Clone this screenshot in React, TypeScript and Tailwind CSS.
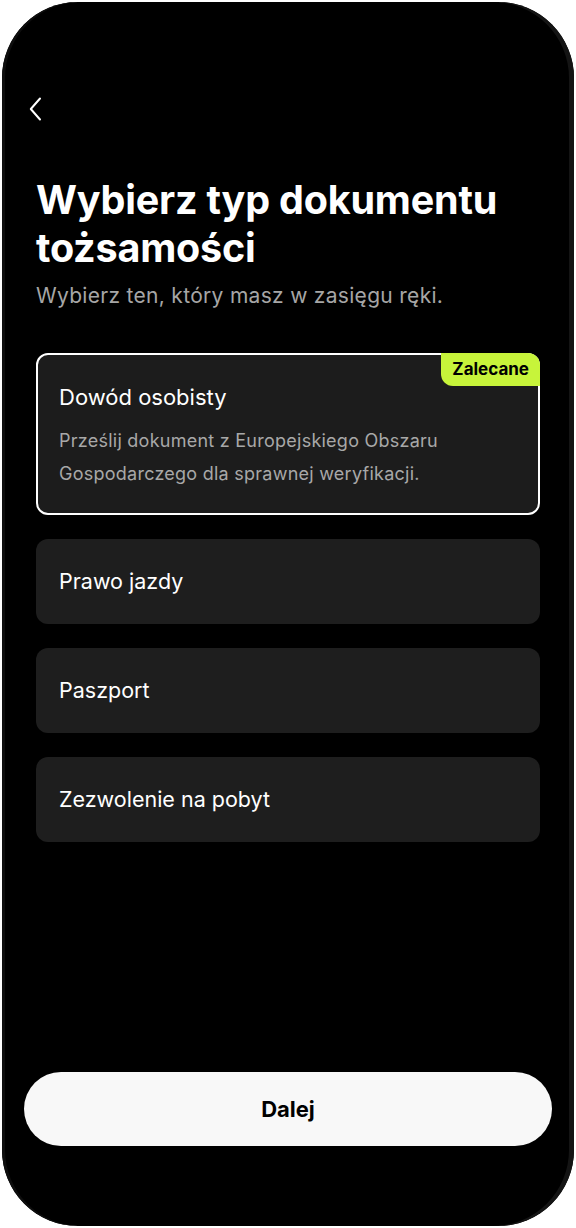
import React from 'react';

const font = { fontFamily: 'Inter, "Liberation Sans", sans-serif' };

const options = ['Prawo jazdy', 'Paszport', 'Zezwolenie na pobyt'];

export default function App() {
  return (
    <div className="min-h-screen bg-white p-[2px]" style={font}>
      <div className="h-[1224px] rounded-[76px] bg-black flex flex-col shadow-[inset_-5px_0_0_#141414,inset_3px_0_0_#0e0e0e]">
        {/* Back */}
        <div className="pt-[95px] pl-[27px]">
          <svg width="14" height="24" viewBox="0 0 14 24" fill="none">
            <path d="M11 1.5 1.8 12 11 22.5" stroke="#fff" strokeWidth="2" strokeLinecap="round" strokeLinejoin="round" />
          </svg>
        </div>

        {/* Heading */}
        <div className="px-[34px] mt-[55px]">
          <h1 className="text-[39.5px] leading-[48px] font-bold text-white tracking-[-0.2px]">
            Wybierz typ dokumentu tożsamości
          </h1>
          <p className="mt-[10px] text-[21px] leading-[28px] tracking-[0.3px] text-[#a6a6a6]">
            Wybierz ten, który masz w zasięgu ręki.
          </p>
        </div>

        {/* Options */}
        <div className="px-[34px] mt-[43px] flex flex-col gap-[24px]">
          <div className="relative rounded-[12px] border-2 border-white bg-[#1c1c1c] px-[21px] pt-[27px] pb-[23px]">
            <span className="absolute -top-[2px] -right-[2px] rounded-tr-[12px] rounded-bl-[12px] bg-[#c7f43a] px-[11px] py-[5px] text-[17px] leading-[23px] font-bold text-black">
              Zalecane
            </span>
            <div className="text-[22px] leading-[30px] text-white">Dowód osobisty</div>
            <p className="mt-[12px] text-[18px] leading-[33px] tracking-[0.25px] text-[#a8a8a8]">
              Prześlij dokument z Europejskiego Obszaru Gospodarczego dla sprawnej weryfikacji.
            </p>
          </div>
          {options.map((o) => (
            <div key={o} className="h-[85px] rounded-[12px] bg-[#1e1e1e] px-[23px] flex items-center text-[21.5px] text-white">
              {o}
            </div>
          ))}
        </div>

        <div className="flex-1" />

        {/* CTA */}
        <div className="px-[22px] pb-[80px]">
          <button className="w-full h-[74px] rounded-full bg-[#f8f8f8] text-[22px] font-bold text-black">
            Dalej
          </button>
        </div>
      </div>
    </div>
  );
}
